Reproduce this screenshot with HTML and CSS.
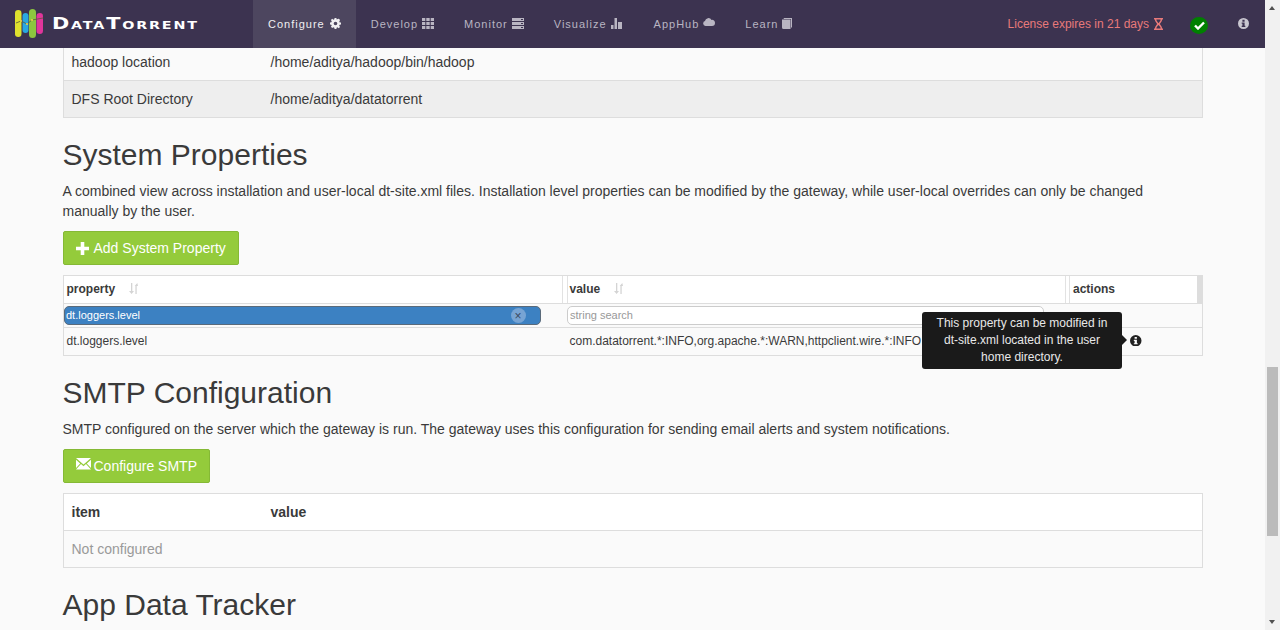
FILE: index.html
```html
<!DOCTYPE html>
<html lang="en">
<head>
<meta charset="utf-8">
<title>DataTorrent - Configure</title>
<link rel="stylesheet" href="styles.css">
</head>
<body>
<div class="app">
  <div class="page">
    <header class="navbar">
      <a class="brand">
        <svg class="logo" width="29" height="30" viewBox="0 0 29 30">
          <rect x="0" y="1" width="6.500" height="27" rx="3.200" fill="#dfe22e"/>
          <rect x="7.500" y="4" width="6" height="20" rx="3" fill="#29a8e0"/>
          <rect x="14" y="0" width="7" height="29" rx="3.500" fill="#8cc63f"/>
          <rect x="21.500" y="4" width="6.500" height="21" rx="3.200" fill="#e0359b"/>
          <path d="M1 14l5-2 6 3 5-4 11-2" fill="none" stroke="#5b5a3a" stroke-width=".8"/>
          <circle cx="6" cy="12" r="1" fill="#f2d64b"/>
          <circle cx="12" cy="15" r="1" fill="#f2d64b"/>
          <circle cx="17" cy="11" r="1" fill="#f2d64b"/>
        </svg>
        <span class="wordmark">DataTorrent</span>
      </a>
      <nav class="nav">
        <a class="nav-item active">Configure
          <svg class="ni gear" width="11" height="11" viewBox="0 0 12 12"><path fill="currentColor" fill-rule="evenodd" d="M5 0h2l.3 1.600 1-.4L9.600 .9l1.400 1.400-.9 1.400.5 1.100L12 5v2l-1.500.3-.5 1 .9 1.400-1.400 1.400-1.300-.9-1 .4L7 12H5l-.3-1.500-1-.4-1.300.9L1 9.600l.9-1.300-.5-1L0 7V5l1.500-.3.400-1.100L1 2.300 2.400.9l1.300.9 1-.4zM6 4a2 2 0 1 0 0 4 2 2 0 0 0 0-4z"/></svg>
        </a>
        <a class="nav-item">Develop
          <svg class="ni" width="12" height="11" viewBox="0 0 12 11"><path fill="currentColor" d="M0 0h3.300v3H0zM4.300 0h3.400v3H4.300zM8.700 0H12v3H8.700zM0 4h3.300v3H0zM4.300 4h3.400v3H4.300zM8.700 4H12v3H8.700zM0 8h3.300v3H0zM4.300 8h3.400v3H4.300zM8.700 8H12v3H8.700z"/></svg>
        </a>
        <a class="nav-item">Monitor
          <svg class="ni" width="12" height="11" viewBox="0 0 12 11"><path fill="currentColor" fill-rule="evenodd" d="M0 0h12v3H0zM9 1v1h2V1zM0 4h12v3H0zM9 5v1h2V5zM0 8h12v3H0zM9 9v1h2V9z"/></svg>
        </a>
        <a class="nav-item">Visualize
          <svg class="ni chart" width="11" height="11" viewBox="0 0 11 11"><path fill="currentColor" d="M0 7h2.500v4H0zM3.500 0H6v11H3.500zM7 4h1.500v7H7zM8.500 4H11v7H8.500z"/></svg>
        </a>
        <a class="nav-item">AppHub
          <svg class="ni cloud" width="12" height="8" viewBox="0 0 12 8"><path fill="currentColor" d="M2.500 8A2.500 2.500 0 0 1 2 3.100 3.500 3.500 0 0 1 8.500 1.900 3 3 0 0 1 12 5a3 3 0 0 1-3 3z"/></svg>
        </a>
        <a class="nav-item">Learn
          <svg class="ni" width="10" height="11" viewBox="0 0 10 11"><path fill="currentColor" d="M1.500 0H10v9.500H9V1H2zM0 1.500h8.500V11H1.500A1.500 1.500 0 0 1 0 9.500z"/></svg>
        </a>
      </nav>
      <div class="nav-right">
        <span class="license">License expires in 21 days
          <svg class="hour" width="9" height="12" viewBox="0 0 9 12"><path fill="none" stroke="#e87a7a" stroke-width="1.500" d="M0 .8h9M0 11.200h9M1.500 .8c0 3.500 2 3.500 2.500 5.200-.5 1.800-2.500 1.800-2.500 5.200M7.500 .8c0 3.500-2 3.500-2.500 5.200.5 1.800 2.500 1.800 2.500 5.200"/></svg>
        </span>
        <span class="status">
          <svg width="11" height="9" viewBox="0 0 11 9"><path fill="none" stroke="#fff" stroke-width="2.400" d="M1 4.500l3 3L10 1.500"/></svg>
        </span>
        <svg class="info-nav" width="11" height="11" viewBox="0 0 12 12"><use href="#info"/></svg>
      </div>
    </header>

    <main class="container">
      <div class="table kv clipped">
        <div class="row first"><span>hadoop location</span><span>/home/aditya/hadoop/bin/hadoop</span></div>
        <div class="row alt"><span>DFS Root Directory</span><span>/home/aditya/datatorrent</span></div>
      </div>

      <h2>System Properties</h2>
      <p class="lede">A combined view across installation and user-local dt-site.xml files. Installation level properties can be modified by the gateway, while user-local overrides can only be changed manually by the user.</p>
      <a class="btn">
        <svg class="btn-ico" width="13" height="13" viewBox="0 0 13 13"><path fill="#fff" d="M4.700 0h3.600v4.700H13v3.600H8.300V13H4.700V8.300H0V4.700h4.700z"/></svg>
        Add System Property
      </a>

      <div class="table props">
        <div class="p-row p-head">
          <div class="th prop">property <svg class="sort" width="9" height="11" viewBox="0 0 9 11"><use href="#sort"/></svg></div>
          <div class="th val">value <svg class="sort" width="9" height="11" viewBox="0 0 9 11"><use href="#sort"/></svg></div>
          <div class="th last">actions</div>
        </div>
        <div class="p-row p-filter">
          <div class="filter-cell">
            <div class="pill"><span>dt.loggers.level</span><span class="clear">×</span></div>
          </div>
          <div class="filter-cell second"><div class="search">string search</div></div>
          <div></div>
        </div>
        <div class="p-row p-data">
          <div class="td">dt.loggers.level</div>
          <div class="td">com.datatorrent.*:INFO,org.apache.*:WARN,httpclient.wire.*:INFO</div>
          <div class="td act">
            <svg class="info" width="11.500" height="11.500" viewBox="0 0 12 12"><use href="#info"/></svg>
            <div class="tooltip">This property can be modified in dt-site.xml located in the user home directory.</div>
          </div>
        </div>
      </div>

      <h2>SMTP Configuration</h2>
      <p class="lede">SMTP configured on the server which the gateway is run. The gateway uses this configuration for sending email alerts and system notifications.</p>
      <a class="btn">
        <svg class="btn-ico mail" width="15" height="12" viewBox="0 0 15 12"><path fill="#fff" d="M0 0h15L7.500 6.500zM0 1.700l4.200 3.700L0 10zM15 1.700v8.300l-4.200-4.600zM5 6.100l2.500 2.200L10 6.100l5 5.400H0z"/></svg>
        Configure SMTP
      </a>

      <div class="table kv smtp">
        <div class="row head"><span>item</span><span>value</span></div>
        <div class="row muted"><span>Not configured</span></div>
      </div>

      <h2 class="tracker">App Data Tracker</h2>
    </main>
  </div>

  <div class="scrollbar" aria-hidden="true">
    <span class="arrow up"></span>
    <span class="thumb"></span>
    <span class="arrow down"></span>
  </div>
</div>

<svg class="defs" width="0" height="0">
  <defs>
    <g id="info"><path fill="currentColor" fill-rule="evenodd" d="M6 0a6 6 0 1 1 0 12A6 6 0 0 1 6 0zM4.800 2v2h2.400V2zM4 5v1.200h.8v2.300H4v1.200h4V8.500h-.8V5z"/></g>
    <g id="sort"><path fill="currentColor" d="M2 0h1.300v8H5L2.600 11 0 8h2zM5.700 3L8.300 0 9 3H7.700v8H6.400V3z"/></g>
  </defs>
</svg>
</body>
</html>
```
FILE: styles.css
```css
* { box-sizing: border-box; }
html, body { margin: 0; height: 630px; overflow: hidden; }
body {
  font-family: "Liberation Sans", Arial, sans-serif;
  font-size: 14px;
  line-height: 20px;
  color: #3a3a3a;
  background: #fafafa;
}
.defs { position: absolute; }
.app { display: flex; height: 630px; }
.page { flex: 1; min-width: 0; overflow: hidden; }

.navbar {
  display: flex;
  height: 48px;
  background: #3c3350;
  color: #b9b5c2;
}
.brand { display: flex; align-items: center; width: 253px; padding: 0 0 0 15px; }
.logo { flex: none; margin-top: -1px; }
.wordmark {
  margin: 0 0 0 8px;
  font-family: "DejaVu Sans", sans-serif;
  font-size: 16px;
  font-weight: bold;
  font-variant: small-caps;
  letter-spacing: 1.400px;
  color: #fff;
  white-space: nowrap;
  transform: scaleX(1.300);
  transform-origin: left center;
}
.nav { display: flex; }
.nav-item {
  display: flex;
  align-items: center;
  gap: 4px;
  padding: 0 15px;
  font-size: 11px;
  letter-spacing: 1px;
  white-space: nowrap;
}
.nav-item.active { background: #4d465f; color: #f0eff2; }
.ni { flex: none; margin-top: -2px; }
.ni.gear { margin-left: 1px; }
.ni.chart { margin-right: 2px; }
.ni.cloud { margin-top: -4px; }
.nav-right { display: flex; align-items: center; margin-left: auto; padding-right: 16px; }
.license { display: flex; align-items: center; gap: 5px; font-size: 12px; color: #e87a7a; }
.hour { margin-top: -1px; }
.status {
  display: flex;
  align-items: center;
  justify-content: center;
  width: 18px;
  height: 17px;
  margin: 2px 0 0 27px;
  border-radius: 50%;
  background: #008000;
}
.info-nav { margin: -2px 0 0 30px; color: #c9c7d0; }

.container { padding: 0 62.500px; }
.container > .table { width: 1140px; }

.table { border: 1px solid #ddd; border-top: 0; background: #fafafa; }
.row { display: grid; grid-template-columns: 199px 1fr; padding: 0 8px; align-items: center; height: 37px; border-bottom: 1px solid #ddd; }
.row:last-child { border-bottom: 0; height: 36px; }
.row.first { height: 33px; padding-bottom: 5px; }
.row.alt { background: #eee; }
.row.head { height: 37px; font-weight: bold; background: #fff; }
.row.muted { color: #999; }
.smtp { margin-top: 10px; border-top: 1px solid #ddd; }

h2 { margin: 0; font-size: 30px; font-weight: normal; line-height: 33px; color: #3a3a3a; }
.clipped + h2 { margin-top: 20px; }
.lede { margin: 10px 0; }
.btn {
  display: inline-flex;
  align-items: center;
  height: 34px;
  padding: 0 12px;
  border: 1px solid #85b935;
  border-radius: 2px;
  background: #94cb3b;
  color: #fff;
}
.btn-ico { flex: none; margin-right: 5px; }
.btn-ico.mail { margin-right: 3px; margin-top: -4px; }

.props { margin-top: 10px; border-top: 1px solid #ddd; font-size: 12px; }
.p-row { display: grid; grid-template-columns: 501px 503px 1fr; }
.p-head { height: 28px; background: #fff; border-bottom: 1px solid #ddd; font-weight: bold; }
.th { display: flex; align-items: center; gap: 14px; padding: 0 3px 2px; }
.th.prop { margin-right: 2px; border-right: 1px solid #e2e2e2; }
.th.val { margin: 0 1.500px 0 2px; padding-left: 2px; border: 1px solid #e2e2e2; border-width: 0 1px; }
.th.last { margin-left: 1.500px; padding-left: 3px; border-left: 1px solid #e2e2e2; border-right: 5px solid #ddd; }
.sort { color: #d4d4d4; }
.p-filter { height: 24px; border-bottom: 1px solid #ddd; font-size: 11px; }
.filter-cell { padding: 2px 24px 0 0; }
.filter-cell.second { padding: 2px 24px 0 2.500px; }
.pill {
  display: flex;
  align-items: center;
  justify-content: space-between;
  height: 19px;
  padding: 0 14px 2px 1.500px;
  border: 1px solid #5a6a7a;
  border-radius: 5px;
  background: #3c81c2;
  color: #fff;
}
.clear {
  display: flex;
  align-items: center;
  justify-content: center;
  width: 15px;
  height: 15px;
  margin-bottom: -2px;
  border-radius: 50%;
  background: #77a4d4;
  color: #3a4a60;
  font-size: 12px;
  line-height: 1;
}
.search {
  height: 19px;
  padding-left: 2px;
  border: 1px solid #ccc;
  border-radius: 5px;
  background: #fff;
  color: #999;
  line-height: 16px;
}
.p-data { height: 27px; }
.td { display: flex; align-items: center; padding: 0 3px 2px; white-space: nowrap; }
.td + .td { padding-left: 5px; }
.act { position: relative; padding-left: 62.500px !important; padding-bottom: 0; }
.info { flex: none; color: #222; margin: -2px 0 0 0; }
.tooltip {
  position: absolute;
  right: 79.500px;
  top: -16px;
  width: 200px;
  padding: 3px 8px 3px;
  border-radius: 3px;
  background: #1a1a1a;
  color: #e8e8e8;
  font-size: 12px;
  line-height: 17px;
  text-align: center;
  white-space: normal;
  z-index: 2;
}
.tooltip::after {
  content: "";
  position: absolute;
  right: -5px;
  top: 23px;
  border-left: 5px solid #1a1a1a;
  border-top: 5px solid transparent;
  border-bottom: 5px solid transparent;
}
.props + h2 { margin-top: 20px; }
.tracker { margin-top: 20px; }

.scrollbar {
  position: relative;
  flex: none;
  width: 15px;
  background: #f1f1f1;
}
.thumb { position: absolute; left: 2px; top: 367px; width: 11px; height: 169px; background: #bbb; }
.arrow { position: absolute; left: 4px; border-left: 3.500px solid transparent; border-right: 3.500px solid transparent; }
.arrow.up { top: 6px; border-bottom: 4px solid #505050; }
.arrow.down { bottom: 6px; border-top: 4px solid #505050; }
```
